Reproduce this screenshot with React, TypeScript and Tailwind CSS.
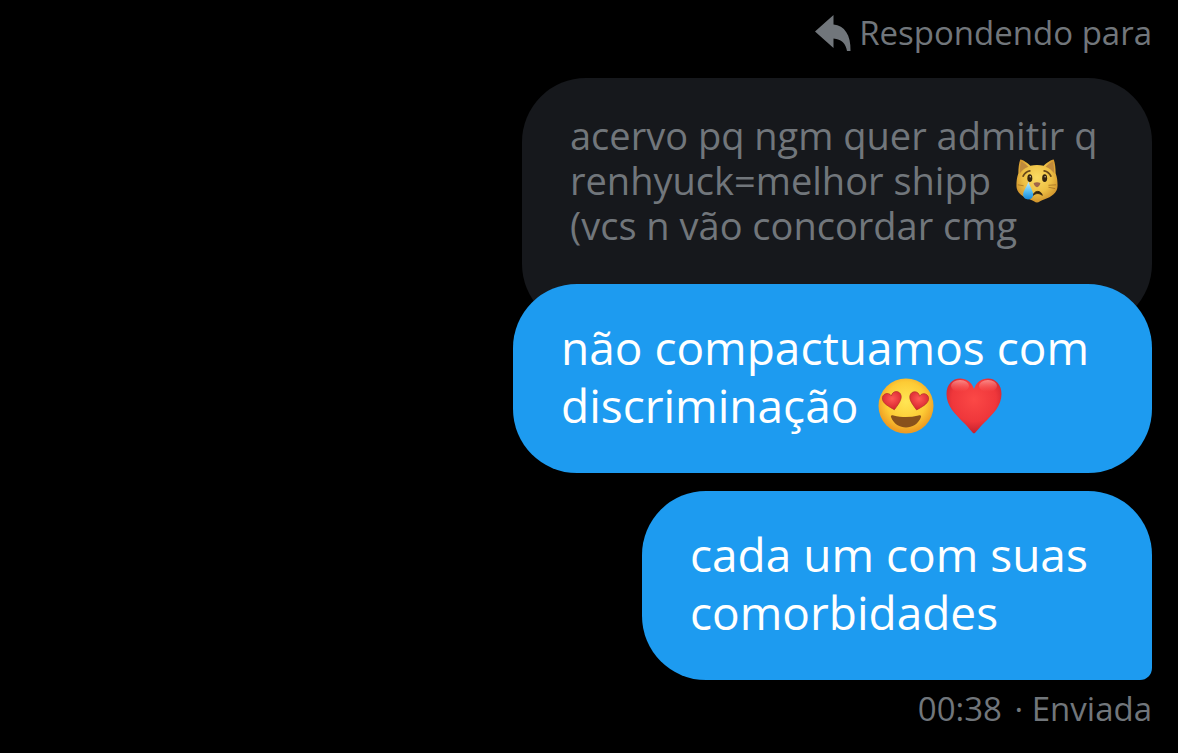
import type { ReactNode } from 'react';

function ReplyIcon() {
  return (
    <svg viewBox="0 0 36 36" className="h-9 w-9 shrink-0 fill-[#71767b]" aria-hidden="true">
      <path d="M0 16.500 L18.500 0 V9.500 C29.500 10.500 36 20 35.500 36 H32 C31 29 26.500 24 18.500 23.500 V33 Z" />
    </svg>
  );
}

function CryingCat() {
  return (
    <svg viewBox="0 0 44 46" className="mt-px ml-6 inline-block h-11 w-11 align-top" role="img" aria-label="crying cat">
      <defs>
        <radialGradient id="catFace" cx="50%" cy="42%" r="58%">
          <stop offset="0" stopColor="#fadb62" />
          <stop offset="0.6" stopColor="#eec044" />
          <stop offset="1" stopColor="#cf922c" />
        </radialGradient>
        <linearGradient id="catTear" x1="0" y1="0" x2="0" y2="1">
          <stop offset="0" stopColor="#c5efff" />
          <stop offset="0.55" stopColor="#55bdf3" />
          <stop offset="1" stopColor="#1688d8" />
        </linearGradient>
      </defs>
      <path
        d="M4.500 0.500 C3 4 2.500 10 2.500 15 C1 19 0.500 23 0.500 28 C0.500 35 7 40 14 42 C18 43.200 20 45.500 22 45.500 C24 45.500 26 43.200 30 42 C37 40 43.500 35 43.500 28 C43.500 23 43 19 41.500 15 C41.500 10 41 4 39.500 0.500 C36 1 31.500 4.500 29 7 C24.500 6 19.500 6 15 7 C12.500 4.500 8 1 4.500 0.500 Z"
        fill="url(#catFace)"
      />
      <path d="M5.500 2.500 C8 3.500 11 6 13 8 C9 9.500 6 12 4 15 C4 10 4.500 5.500 5.500 2.500 Z M38.500 2.500 C36 3.500 33 6 31 8 C35 9.500 38 12 40 15 C40 10 39.500 5.500 38.500 2.500 Z" fill="#c08a3c" />
      <ellipse cx="14.500" cy="20" rx="2.600" ry="4" fill="#33240f" />
      <ellipse cx="30" cy="20" rx="2.600" ry="4" fill="#33240f" />
      <circle cx="15" cy="18.500" r="0.800" fill="#dcc79a" />
      <circle cx="30.500" cy="18.500" r="0.800" fill="#dcc79a" />
      <path d="M7.500 18 Q9.500 13.500 14.500 12.500 M36.500 18 Q34.500 13.500 29.500 12.500" fill="none" stroke="#69491a" strokeWidth="1.800" strokeLinecap="round" />
      <path d="M34 27.500 L42 27 M34 29.500 L41 31 M2 27 L8 28" stroke="#a06f22" strokeWidth="0.800" />
      <path d="M18.500 25 Q22 23.500 25.500 25 C25.500 27.500 23.500 29 22 29.500 C20.500 29 18.500 27.500 18.500 25 Z" fill="#a0664a" />
      <path d="M18 38 C19 32.500 26.500 32.500 27.500 38 C25 35.500 20.500 35.500 18 38 Z" fill="#33240f" stroke="#33240f" strokeWidth="1" strokeLinejoin="round" />
      <path d="M13 23.500 C11.500 29 7.500 33 7.500 37.500 C7.500 44 18 44 18 37.500 C18 33 14.500 29 13 23.500 Z" fill="url(#catTear)" />
    </svg>
  );
}

function HeartEyes() {
  const eye = 'M9.500 18 C5 14 0 10 0 5.500 C0 0 7.500 -1.500 9.500 4 C11.500 -1.500 19 0 19 5.500 C19 10 14 14 9.500 18 Z';
  return (
    <svg viewBox="0 0 56 56" className="mt-0.5 ml-2 inline-block h-14 w-14 align-top" role="img" aria-label="heart eyes">
      <defs>
        <radialGradient id="face" cx="50%" cy="42%" r="55%">
          <stop offset="0" stopColor="#ffe654" />
          <stop offset="0.65" stopColor="#fdcb35" />
          <stop offset="1" stopColor="#ee9c22" />
        </radialGradient>
        <radialGradient id="eyes" cx="50%" cy="35%" r="65%">
          <stop offset="0" stopColor="#ff5954" />
          <stop offset="1" stopColor="#d4202c" />
        </radialGradient>
      </defs>
      <circle cx="28" cy="28" r="27.500" fill="url(#face)" />
      <path d={eye} transform="translate(5 14) rotate(-12 9 9)" fill="url(#eyes)" stroke="#b5322a" strokeWidth="0.700" />
      <path d={eye} transform="translate(31 14) rotate(12 9 9)" fill="url(#eyes)" stroke="#b5322a" strokeWidth="0.700" />
      <path d="M13 39 C12.500 37.500 14 37 15.500 37.500 C24 39.500 32 39.500 40.500 37.500 C42 37 43.500 37.500 43 39 C40.500 46 34 49.500 28 49.500 C22 49.500 15.500 46 13 39 Z" fill="#89511b" />
    </svg>
  );
}

function RedHeart() {
  return (
    <svg viewBox="0 0 56 56" className="mt-0.5 ml-3 inline-block h-14 w-14 align-top" role="img" aria-label="red heart">
      <defs>
        <radialGradient id="heart" cx="50%" cy="38%" r="62%">
          <stop offset="0" stopColor="#fb4846" />
          <stop offset="0.65" stopColor="#ef373b" />
          <stop offset="1" stopColor="#c4202d" />
        </radialGradient>
        <linearGradient id="shine" x1="0" y1="0" x2="0" y2="1">
          <stop offset="0" stopColor="#ffb0aa" />
          <stop offset="1" stopColor="#ff6862" stopOpacity="0" />
        </linearGradient>
      </defs>
      <path
        d="M28 55.500 C26 54.500 23 50 18 45 C9 36 0.500 28 0.500 16 C0.500 6.500 6.500 0.500 14 0.500 C20.500 0.500 26 4.500 28 11 C30 4.500 35.500 0.500 42 0.500 C49.500 0.500 55.500 6.500 55.500 16 C55.500 28 47 36 38 45 C33 50 30 54.500 28 55.500 Z"
        fill="url(#heart)"
      />
      <ellipse cx="14" cy="8" rx="9" ry="6" fill="url(#shine)" opacity="0.700" />
      <ellipse cx="42" cy="8" rx="9" ry="6" fill="url(#shine)" opacity="0.700" />
    </svg>
  );
}

function Bubble({ children, className }: { children: ReactNode; className: string }) {
  return (
    <div
      className={`relative max-w-full rounded-[64px] bg-[#1d9bf0] pt-[34px] pr-12 pb-[39px] pl-12 text-[46px] leading-[58px] text-white ${className}`}
    >
      {children}
    </div>
  );
}

export default function App() {
  return (
    <main className="flex min-h-screen flex-col items-end bg-black pt-[13px] pr-[26px] font-['Open_Sans',sans-serif] text-[#71767b]">
      <div className="flex items-center gap-2 text-[33px] leading-10">
        <ReplyIcon />
        <span>Respondendo para</span>
      </div>

      {/* mensagem citada, fica por baixo da resposta */}
      <blockquote className="mt-[25px] w-[630px] max-w-full rounded-[64px] bg-[#16181c] pt-[35px] pb-20 pl-12 text-[38px] leading-[45px]">
        acervo pq ngm quer admitir q<br />
        renhyuck=melhor shipp<CryingCat /><br />
        (vcs n vão concordar cmg
      </blockquote>

      <Bubble className="-mt-11 w-[639px]">
        não compactuamos com<br />
        discriminação <HeartEyes /><RedHeart />
      </Bubble>

      <Bubble className="mt-[18px] w-[510px] rounded-br-xl">
        cada um com suas<br />
        comorbidades
      </Bubble>

      <p className="mt-[9px] text-[33px] leading-10">
        <time className="mr-1">00:38</time> · Enviada
      </p>
    </main>
  );
}
